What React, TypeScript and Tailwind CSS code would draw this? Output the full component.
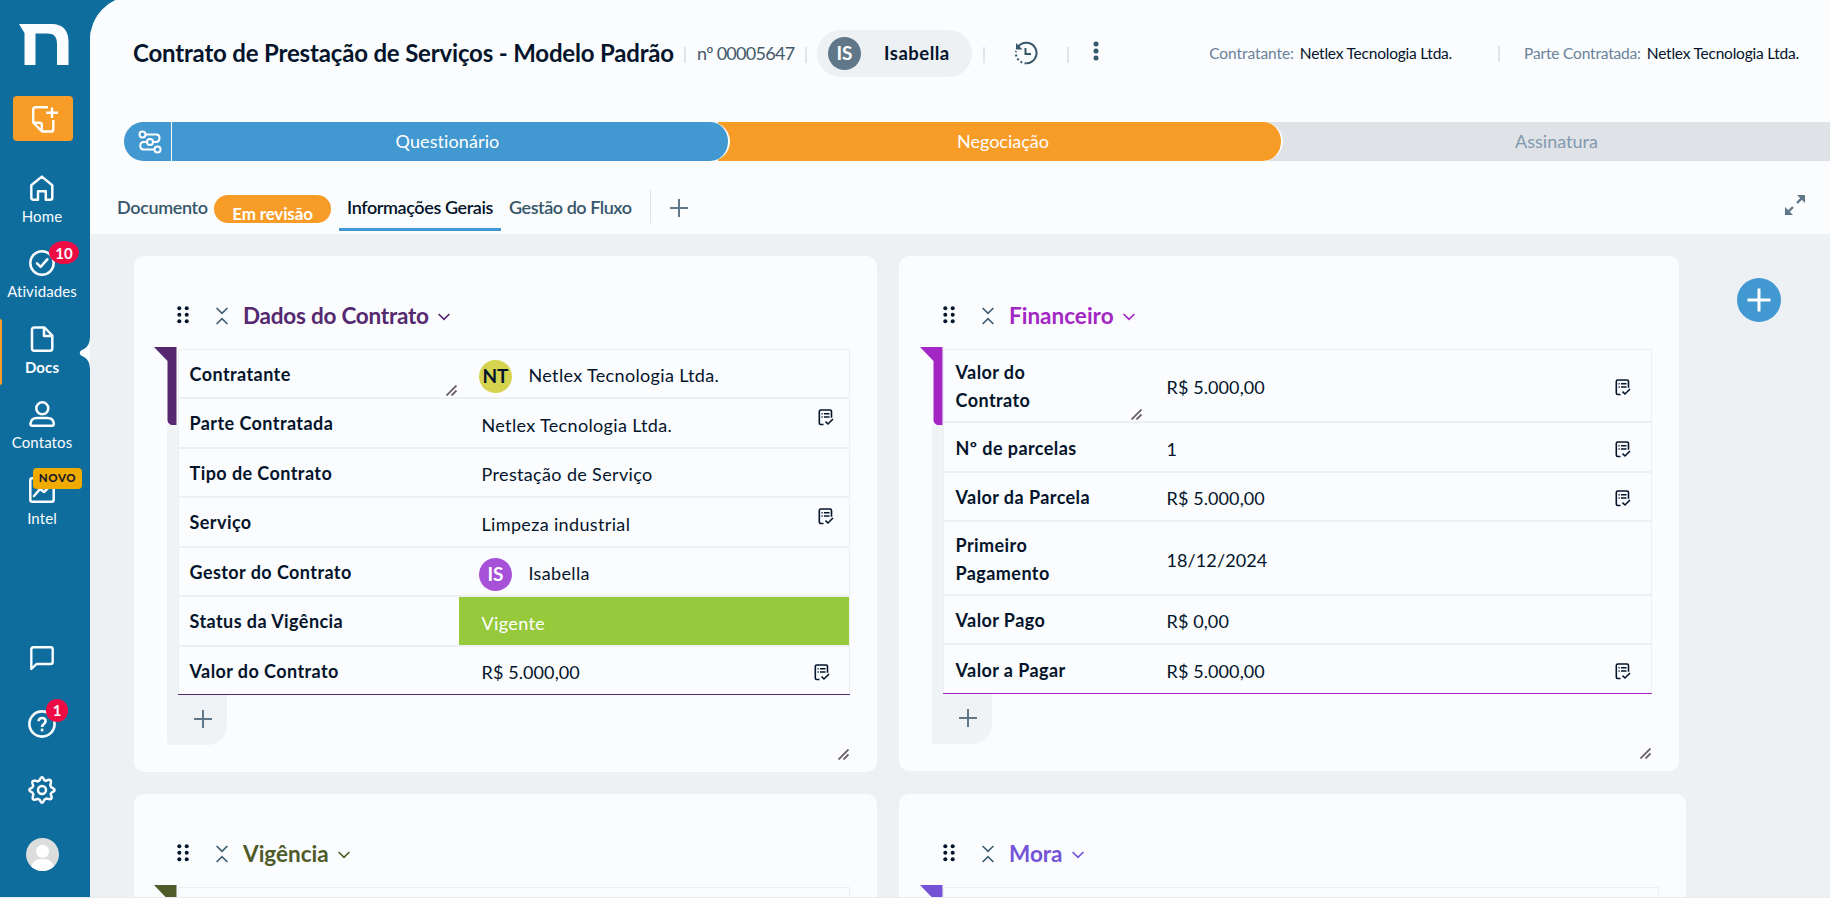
import type { ReactNode } from 'react';
import clsx from 'clsx';

type Row = {
  label: string;
  value: string;
  height: string;
  avatar?: { initials: string; className: string };
  note?: string;
  highlight?: boolean;
  resizer?: boolean;
};

const contractRows: Row[] = [
  { label: 'Contratante', value: 'Netlex Tecnologia Ltda.', height: 'h-[49px]', avatar: { initials: 'NT', className: 'bg-[#d6d44f] text-[#04142b]' }, resizer: true },
  { label: 'Parte Contratada', value: 'Netlex Tecnologia Ltda.', height: 'h-[50px]', note: 'mr-[15px] mb-[11px]' },
  { label: 'Tipo de Contrato', value: 'Prestação de Serviço', height: 'h-[49px]' },
  { label: 'Serviço', value: 'Limpeza industrial', height: 'h-[50px]', note: 'mr-[15px] mb-[11px]' },
  { label: 'Gestor do Contrato', value: 'Isabella', height: 'h-[49px]', avatar: { initials: 'IS', className: 'bg-[#a651d8] text-white' } },
  { label: 'Status da Vigência', value: 'Vigente', height: 'h-[50px]', highlight: true },
  { label: 'Valor do Contrato', value: 'R$ 5.000,00', height: 'h-[48px]', note: 'mr-[19px] mt-[4px]' },
];

const financeRows: Row[] = [
  { label: 'Valor do Contrato', value: 'R$ 5.000,00', height: 'h-[73px]', note: 'mr-5 mt-[4px]', resizer: true },
  { label: 'Nº de parcelas', value: '1', height: 'h-[50px]', note: 'mr-5 mt-[4px]' },
  { label: 'Valor da Parcela', value: 'R$ 5.000,00', height: 'h-[49px]', note: 'mr-5 mt-[4px]' },
  { label: 'Primeiro Pagamento', value: '18/12/2024', height: 'h-[74px]' },
  { label: 'Valor Pago', value: 'R$ 0,00', height: 'h-[49px]' },
  { label: 'Valor a Pagar', value: 'R$ 5.000,00', height: 'h-[49px]', note: 'mr-5 mt-[4px]' },
];

function Logo() {
  return (
    <svg width="50" height="42" viewBox="0 0 50 42" fill="#fafcfe">
      <path d="M0 0H33C43.500 0 49.500 6.500 49.500 17V41H38V20C38 12.500 35 9.500 28 9.500H16.500V41H5.500V9Z" />
    </svg>
  );
}

function NewDocIcon() {
  return (
    <svg width="28" height="28" viewBox="0 0 28 28" fill="none" stroke="#fff" strokeWidth="2.400" strokeLinejoin="round">
      <path d="M17 2.200H4.500Q2.200 2.200 2.200 4.500V17.500L11 26.500H20Q22.300 26.500 22.300 24.200V15" />
      <path d="M2.500 17.800H8.500Q10.800 17.800 10.800 20V26" />
      <path d="M21 2.500V13M15.200 7.800H27" />
    </svg>
  );
}

function StrokeIcon({ children }: { children: ReactNode }) {
  return (
    <svg width="26" height="26" viewBox="0 0 26 26" fill="none" stroke="#fafcfe" strokeWidth="2.500" strokeLinecap="round" strokeLinejoin="round">
      {children}
    </svg>
  );
}

const navItems = [
  {
    label: 'Home',
    icon: <path d="M2.300 10.200 12.800 1.600 23.300 10.200V22.700Q23.300 24.700 21.300 24.700H16.800V16.200H9V24.700H4.300Q2.300 24.700 2.300 22.700Z" />,
  },
  {
    label: 'Atividades',
    icon: <><circle cx="13" cy="13" r="11.700" /><path d="M8 13.300 11.600 16.800 18.300 9.300" /></>,
    badge: '10',
  },
  {
    label: 'Docs',
    icon: <path d="M5.300 1.500H15.500L23.300 9.500V22.500Q23.300 24.700 21 24.700H5.300Q3 24.700 3 22.500V3.800Q3 1.500 5.300 1.500ZM15 2V10H23" />,
    active: true,
  },
  {
    label: 'Contatos',
    icon: <><circle cx="13.300" cy="7.300" r="6" /><path d="M1.500 22.500C2 18.500 4.500 17 8 17H18.500C22 17 24.300 18.500 24.800 22.500Q25 24.700 23 24.700H3.300Q1.300 24.700 1.500 22.500Z" /></>,
  },
  {
    label: 'Intel',
    icon: <><rect x="1.300" y="1.300" width="23.400" height="23.400" rx="2" /><path d="M5 19 11 12 15 15 21 9" /></>,
    tag: 'NOVO',
  },
];

function Sidebar() {
  return (
    <aside className="relative flex w-[90px] shrink-0 flex-col bg-[#0f6d9e] text-[#fafcfe]">
      <div className="pt-6 pl-[19px]"><Logo /></div>
      <button className="mt-[30px] ml-[13px] flex h-[45px] w-[60px] items-center justify-center rounded bg-[#f89c28] pl-1">
        <NewDocIcon />
      </button>
      <nav className="mt-[34px] w-[84px]">
        {navItems.map((item) => (
          <div key={item.label} className="relative flex h-[75.4px] flex-col items-center">
            {item.active && <span className="absolute -top-[7px] left-0 h-[66px] w-[2px] rounded-r bg-[#f89c28]" />}
            <StrokeIcon>{item.icon}</StrokeIcon>
            <span className={clsx('mt-[3px] text-[15px] leading-6 tracking-[0.1px]', item.active && 'font-bold')}>{item.label}</span>
            {item.badge && (
              <span className="absolute -top-[9px] left-[49px] flex h-[23px] w-[30px] items-center justify-center rounded-[50%] bg-[#ec0b43] text-[15px] font-bold">
                {item.badge}
              </span>
            )}
            {item.tag && (
              <span className="absolute -top-[9px] left-[33px] flex h-[21px] w-[49px] items-center justify-center rounded bg-[#f0ab00] text-[11.5px] font-black tracking-[0.6px] text-[#1c1c28]">
                {item.tag}
              </span>
            )}
            {item.active && (
              <svg className="absolute top-[11px] left-[79px]" width="11" height="32" viewBox="0 0 11 32" fill="#fafcfe">
                <path d="M11 0C10.500 8 8 11 2 13.500Q-.500 16 2 18.500C8 21 10.500 24 11 32Z" />
              </svg>
            )}
          </div>
        ))}
      </nav>
      <div className="mt-auto flex w-[84px] flex-col items-center pb-[26px]">
        <svg width="24" height="25" viewBox="0 0 24 25" fill="none" stroke="#fafcfe" strokeWidth="2.400" strokeLinejoin="round">
          <path d="M1.300 23V3.300Q1.300 1.300 3.300 1.300H20.700Q22.700 1.300 22.700 3.300V16Q22.700 18 20.700 18H6.500Z" />
        </svg>
        <div className="relative mt-[39px]">
          <svg width="28" height="28" viewBox="0 0 28 28" fill="none" stroke="#fafcfe" strokeWidth="2.600">
            <circle cx="14" cy="14" r="12.600" />
            <path d="M10.600 11.300C10.600 6.800 17.600 7 17.600 11.200 17.600 13.800 14.100 13.600 14.100 17" />
            <path d="M14.100 18.600V21.400" />
          </svg>
          <span className="absolute -top-[11px] left-[18px] flex h-[23px] w-[22px] items-center justify-center rounded-full bg-[#ec0b43] text-[15px] font-bold">1</span>
        </div>
        <svg className="mt-[38px]" width="28" height="28" viewBox="0 0 28 28" fill="none" stroke="#fafcfe" strokeWidth="2.500" strokeLinejoin="round">
          <path d="M11.700 4.200Q14-1.500 16.300 4.200L17.800 4.900Q23.500 2.200 22.900 6.500L22.300 9.300 23.600 11.700Q29.500 14 23.800 16.300L22.700 18.200Q25.300 23.900 20.900 23L18.300 22.600 16.300 23.800Q14 29.500 11.700 23.800L9.700 22.800Q3.800 25.300 4.800 20.800L5.400 18.300 4.200 16.300Q-1.500 14 4.200 11.700L5.200 9.700Q2.500 3.800 7.300 4.800L9.700 5.400Z" />
          <circle cx="14" cy="14" r="4" />
        </svg>
        <svg className="mt-[34px]" width="33" height="33" viewBox="0 0 33 33">
          <clipPath id="avatar"><circle cx="16.500" cy="16.500" r="16.500" /></clipPath>
          <g clipPath="url(#avatar)">
            <rect width="33" height="33" fill="#dcdddd" />
            <circle cx="16.500" cy="13.300" r="6.500" fill="#fff" />
            <path d="M5 33C5 24 9 21 16.500 21S28 24 28 33Z" fill="#fff" />
          </g>
        </svg>
      </div>
    </aside>
  );
}

function Divider({ className }: { className: string }) {
  return <span className={clsx('h-4 w-[2px] shrink-0 bg-[#dfe5ea]', className)} />;
}

function Header() {
  return (
    <header className="flex h-[108px] pt-[7px] text-[#04142b]">
      <div className="flex h-[100px] w-full items-center">
        <h1 className="ml-[43px] w-[551px] text-[24px] font-bold tracking-[-0.18px] whitespace-nowrap">
          Contrato de Prestação de Serviços - Modelo Padrão
        </h1>
        <Divider className="mt-1" />
        <span className="ml-[11px] w-[108px] text-[18px] tracking-[-0.7px] whitespace-nowrap text-[#455a6b]">nº 00005647</span>
        <Divider className="mt-1" />
        <div className="ml-[10px] flex h-[47px] w-[155px] items-center rounded-full bg-[#edf1f4] pl-[11px]">
          <span className="flex h-[33px] w-[33px] items-center justify-center rounded-full bg-[#60778a] text-[19px] font-bold text-white">IS</span>
          <span className="mt-px ml-[23px] text-[18.5px] font-bold tracking-[0.5px]">Isabella</span>
        </div>
        <Divider className="mt-1 ml-[11px]" />
        <svg className="ml-[29px]" width="24" height="24" viewBox="0 0 24 24" fill="none" stroke="#36566a" strokeWidth="2">
          <path d="M4 5.800A10.300 10.300 0 1 1 12.500 22.300" />
          <path d="M12.500 22.300A10.300 10.300 0 0 1 2 10" strokeDasharray="2 2.300" />
          <path d="M2 2V8.500H8.500Z" fill="#36566a" stroke="none" />
          <path d="M11.500 7V13H17" />
        </svg>
        <Divider className="mt-1 ml-[29px]" />
        <svg className="mb-[4px] ml-[24px]" width="6" height="20" viewBox="0 0 6 20" fill="#36566a">
          <circle cx="3" cy="3" r="2.500" /><circle cx="3" cy="10" r="2.500" /><circle cx="3" cy="17" r="2.500" />
        </svg>
        <div className="mt-px ml-auto flex items-center pr-[31px] text-[15.5px] tracking-[-0.22px] whitespace-nowrap">
          <span className="tracking-[-0.08px] text-[#6b8199]">Contratante:</span>
          <span className="ml-[6px]">Netlex Tecnologia Ltda.</span>
          <Divider className="mr-[24px] ml-[46px]" />
          <span className="tracking-[-0.18px] text-[#6b8199]">Parte Contratada:</span>
          <span className="ml-[6px]">Netlex Tecnologia Ltda.</span>
        </div>
      </div>
    </header>
  );
}

function Stages() {
  return (
    <div className="mt-[18px] ml-[34px] flex h-[39px] text-[18px]">
      <div className="relative z-20 flex w-[606px] rounded-l-[20px] rounded-r-[20px] border-r-2 border-[#fafcfe] bg-[#4298d0] text-white">
        <div className="flex w-[48px] items-center justify-center border-r border-[#fafcfe] pl-1">
          <svg width="24" height="24" viewBox="0 0 24 24" fill="none" stroke="#fff" strokeWidth="2">
            <circle cx="4.500" cy="4.500" r="3" /><circle cx="12" cy="12" r="3" /><circle cx="19.500" cy="19.500" r="3" />
            <path d="M7.500 4.500H18.500Q21.500 4.500 21.500 8T18.500 12H15M9 12H5.500Q2.300 12 2.300 15.700T5.500 19.500H16.500" />
          </svg>
        </div>
        <span className="flex flex-1 items-center justify-center pr-[5px] tracking-[0.1px]">Questionário</span>
      </div>
      <div className="relative z-10 -ml-[12px] flex w-[565px] items-center justify-center rounded-r-[20px] border-r-2 border-[#fafcfe] bg-[#f89c28] pl-[7px] text-white">Negociação</div>
      <div className="-ml-[16px] flex flex-1 items-center justify-center bg-[#dfe2e7] pl-[16px] text-[#8199ae]">Assinatura</div>
    </div>
  );
}

function PlusIcon({ className }: { className?: string }) {
  return (
    <svg className={className} width="18" height="18" viewBox="0 0 18 18" stroke="#60778a" strokeWidth="2">
      <path d="M9 0V18M0 9H18" />
    </svg>
  );
}

function Tabs() {
  return (
    <div className="mt-[24px] flex h-[49px] text-[18px] font-semibold tracking-[-0.45px] whitespace-nowrap text-[#36566a]">
      <span className="ml-[27px] w-[97px] pt-[9px] tracking-[-0.35px]">Documento</span>
      <span className="mt-[10px] flex h-[28px] w-[117px] items-end justify-center rounded-full bg-[#f89c28] text-[17px] leading-[18px] font-bold tracking-[-0.15px] text-white">
        Em revisão
      </span>
      <span className="ml-2 h-[46px] w-[162px] border-b-[3px] border-[#4298d0] pt-[9px] text-center tracking-[-0.4px] text-[#04142b]">Informações Gerais</span>
      <span className="ml-2 w-[122px] pt-[9px]">Gestão do Fluxo</span>
      <span className="mt-[5px] ml-[19px] h-[33px] w-px bg-[#dfe2e7]" />
      <PlusIcon className="mt-[14px] ml-[19px]" />
      <svg className="mt-[9px] mr-[24px] ml-auto" width="22" height="22" viewBox="0 0 22 22" fill="#60778a" stroke="#60778a" strokeWidth="2.400">
        <path d="M13 9 19 3M9 13 3 19" />
        <path d="M13 1H21V9ZM1 13V21H9Z" stroke="none" />
      </svg>
    </div>
  );
}

function NoteIcon({ className }: { className?: string }) {
  return (
    <svg className={className} width="16" height="17" viewBox="0 0 16 17" fill="none" stroke="#04142b" strokeWidth="1.600">
      <path d="M5.500 15.500H2.800Q1.300 15.500 1.300 14V2.500Q1.300 1 2.800 1H12Q13.500 1 13.500 2.500V8.800" />
      <path d="M6 4.800H11.500M6 8H11.500" />
      <path d="M3.500 4.800H4.700M3.500 8H4.700" />
      <path d="M7.500 12.600 10 15 15 10" />
    </svg>
  );
}

function Resizer({ className }: { className: string }) {
  return (
    <svg className={clsx('absolute', className)} width="11" height="11" viewBox="0 0 11 11" stroke="#6b5f66" strokeWidth="1.800">
      <path d="M.5 10.500 10.500.5M5.500 10.500 10.500 5.500" />
    </svg>
  );
}

type CardProps = {
  title: string;
  rows?: Row[];
  className: string;
  titleClass: string;
  flagClass: string;
  lineColor?: string;
  labelWidth?: string;
  textWidth?: string;
};

function Card({ title, rows, className, titleClass, flagClass, lineColor, labelWidth, textWidth }: CardProps) {
  return (
    <section className={clsx('relative rounded-[10px] bg-[#fafcfe] pr-[27px] pl-[44px]', className)}>
      <div className={clsx('flex h-[93px] items-center pt-[27px]', titleClass)}>
        <svg width="12" height="18" viewBox="0 0 12 18" fill="#04142b" className="mb-[3px] -ml-px">
          <circle cx="2.300" cy="2.300" r="2" /><circle cx="9.700" cy="2.300" r="2" />
          <circle cx="2.300" cy="8.800" r="2" /><circle cx="9.700" cy="8.800" r="2" />
          <circle cx="2.300" cy="15.300" r="2" /><circle cx="9.700" cy="15.300" r="2" />
        </svg>
        <svg width="12" height="18" viewBox="0 0 12 18" fill="none" stroke="#3f5f73" strokeWidth="1.700" className="ml-[27px]">
          <path d="M.6 1 6 6.300 11.400 1M.6 17 6 11.700 11.400 17" />
        </svg>
        <h2 className="ml-[15px] text-[22.5px] leading-[30px] font-bold">{title}</h2>
        <svg width="12" height="8" viewBox="0 0 12 8" fill="none" stroke="currentColor" strokeWidth="1.700" className="mt-[2px] ml-[9px]">
          <path d="M.6 1 6 6.300 11.400 1" />
        </svg>
      </div>

      {/* Colored flag on the left edge of the table */}
      <svg className={clsx('absolute top-[91px]', flagClass)} width="24" height="78" viewBox="0 0 24 78" fill="currentColor">
        <path d="M0 0H22.500V78H17Q13.500 76 13.500 74V14Z" />
      </svg>
      {rows && <div className="absolute top-[169px] bottom-[27px] left-[33px] w-[11px] rounded-bl bg-[#eff3f6]" />}

      <div className={clsx('border border-b-0 border-[#edf0f3]', !rows && 'h-[60px]')}>
        {rows?.map((row, i) => (
          <div
            key={row.label}
            className={clsx('flex', row.height, i < rows.length - 1 ? 'border-b-2 border-[#edf0f3]' : clsx('-mr-px -ml-px border-b pr-px pl-px', lineColor))}
          >
            <div className={clsx('relative flex shrink-0 items-center text-[18px] leading-[28px] font-bold tracking-[0.43px] text-[#04142b]', labelWidth)}>
              <span className={textWidth}>{row.label}</span>
              {row.resizer && <Resizer className="right-[2px] bottom-[1px]" />}
            </div>
            <div className={clsx('flex flex-1 items-center text-[18px]', row.highlight ? 'bg-[#97c93c] text-white' : 'text-[#04142b]')}>
              {row.avatar && (
                <span className={clsx('mt-[6px] ml-[20px] -mr-[6px] flex h-[33px] w-[33px] items-center justify-center rounded-full text-[19px] font-bold', row.avatar.className)}>
                  {row.avatar.initials}
                </span>
              )}
              <span className={clsx('mt-1 ml-[22.5px]', /\d/.test(row.value) ? 'tracking-[0.1px]' : 'tracking-[0.35px]')}>{row.value}</span>
              {row.note && <NoteIcon className={clsx('ml-auto', row.note)} />}
            </div>
          </div>
        ))}
      </div>

      {rows && (
        <>
          <div className="-ml-[11px] flex h-[50px] w-[60px] items-center justify-center rounded-br-[20px] rounded-bl bg-[#eff3f6] pb-[2px] pl-[11px]">
            <PlusIcon />
          </div>
          <Resizer className="right-[28px] bottom-[12px]" />
        </>
      )}
    </section>
  );
}

export default function App() {
  return (
    <div className="h-[898px] w-[1830px] overflow-hidden bg-[#e6ecf0] font-['Lato',sans-serif] [font-variant-ligatures:none]">
      <div className="flex h-[897px] overflow-hidden bg-[#0f6d9e]">
        <Sidebar />
        <main className="-mt-1 flex h-[901px] flex-1 flex-col overflow-hidden rounded-tl-[44px] bg-[#edf1f4]">
          <div className="h-[238px] shrink-0 bg-[#fafcfe]">
            <Header />
            <Stages />
            <Tabs />
          </div>
          <div className="flex pt-[22px] pl-[44px]">
            <div className="grid grid-cols-[743px_787px] grid-rows-[516px_110px] gap-[22px]">
              <Card title="Dados do Contrato" rows={contractRows} className="h-[516px]" titleClass="text-[#55286f] tracking-[-0.23px]" flagClass="left-[20px] text-[#55286f]" lineColor="border-[#55286f]" labelWidth="w-[280px] pl-[10.5px]" />
              <Card title="Financeiro" rows={financeRows} className="h-[515px] w-[780px]" titleClass="pl-px text-[#a327c4]" flagClass="left-[21px] text-[#a327c4]" lineColor="border-[#a327c4]" labelWidth="w-[200px] pl-[11.5px]" textWidth="w-[145px] pt-px" />
              <Card title="Vigência" className="" titleClass="text-[#4f5b29]" flagClass="left-[20px] text-[#4f5b29]" />
              <Card title="Mora" className="" titleClass="pl-px text-[#7453d6]" flagClass="left-[21px] text-[#7453d6]" />
            </div>
            <button className="mt-[22px] ml-[51px] flex h-11 w-11 shrink-0 items-center justify-center rounded-full bg-[#4298d0]">
              <svg width="24" height="24" viewBox="0 0 24 24" stroke="#fff" strokeWidth="3"><path d="M12 0.500V23.500M.5 12H23.500" /></svg>
            </button>
          </div>
        </main>
      </div>
    </div>
  );
}
